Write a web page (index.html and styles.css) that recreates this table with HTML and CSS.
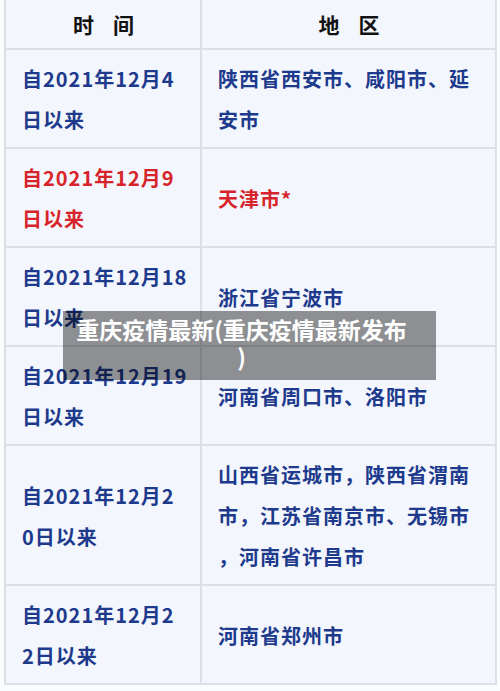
FILE: index.html
```html
<!DOCTYPE html>
<html lang="zh-CN">
<head>
<meta charset="utf-8">
<title>重庆疫情最新</title>
<link rel="stylesheet" href="styles.css">
</head>
<body>
<table class="epi">
  <thead>
    <tr><th class="c-time">时　间</th><th class="c-area">地　区</th></tr>
  </thead>
  <tbody>
    <tr><td class="c-time">自2021年12月4<br>日以来</td><td class="c-area">陕西省西安市、咸阳市、延<br>安市</td></tr>
    <tr class="hot"><td class="c-time">自2021年12月9<br>日以来</td><td class="c-area">天津市*</td></tr>
    <tr><td class="c-time">自2021年12月18<br>日以来</td><td class="c-area">浙江省宁波市</td></tr>
    <tr><td class="c-time">自2021年12月19<br>日以来</td><td class="c-area">河南省周口市、洛阳市</td></tr>
    <tr><td class="c-time">自2021年12月2<br>0日以来</td><td class="c-area">山西省运城市，陕西省渭南<br>市，江苏省南京市、无锡市<br>，河南省许昌市</td></tr>
    <tr><td class="c-time">自2021年12月2<br>2日以来</td><td class="c-area">河南省郑州市</td></tr>
  </tbody>
</table>
<div class="caption">重庆疫情最新(重庆疫情最新发布<br>)</div>
</body>
</html>
```
FILE: styles.css
```css
html, body {
  margin: 0;
  padding: 0;
  background: #fbfcfe;
}
body {
  width: 500px;
  height: 691px;
  overflow: hidden;
  position: relative;
  font-family: "Noto Sans CJK SC", "Noto Sans", sans-serif;
}
.epi {
  margin: 0 0 0 4px;
  width: 493px;
  table-layout: fixed;
  border-collapse: separate;
  border-spacing: 0;
}
.epi th, .epi td {
  box-sizing: border-box;
  background: #f3f6fc;
  border-right: 2px solid #dcdfe5;
  border-bottom: 2px solid #dcdfe5;
  white-space: nowrap;
}
.epi .c-time {
  width: 198px;
  border-left: 2px solid #dcdfe5;
}
.epi .c-area {
  width: 295px;
}
.epi th {
  height: 50px;
  padding: 0;
  line-height: 48px;
  font-size: 21px;
  font-weight: 700;
  letter-spacing: -1px;
  color: #121212;
  text-align: center;
  vertical-align: middle;
}
.epi td {
  padding: 8px 10px 7px 16px;
  line-height: 41px;
  font-size: 20px;
  font-weight: 700;
  letter-spacing: 1px;
  color: #1d3a8d;
  text-align: left;
  vertical-align: middle;
}
.epi td.c-area {
  padding-right: 15px;
}
.epi tr.hot td {
  color: #d7242b;
}
.caption {
  position: absolute;
  left: 63px;
  top: 311px;
  width: 373px;
  height: 69px;
  box-sizing: border-box;
  padding: 5px 26px 0 10px;
  background: rgba(0, 0, 0, 0.42);
  color: #ffffff;
  font-size: 23px;
  font-weight: 700;
  line-height: 27px;
  text-align: center;
  white-space: nowrap;
}
```
